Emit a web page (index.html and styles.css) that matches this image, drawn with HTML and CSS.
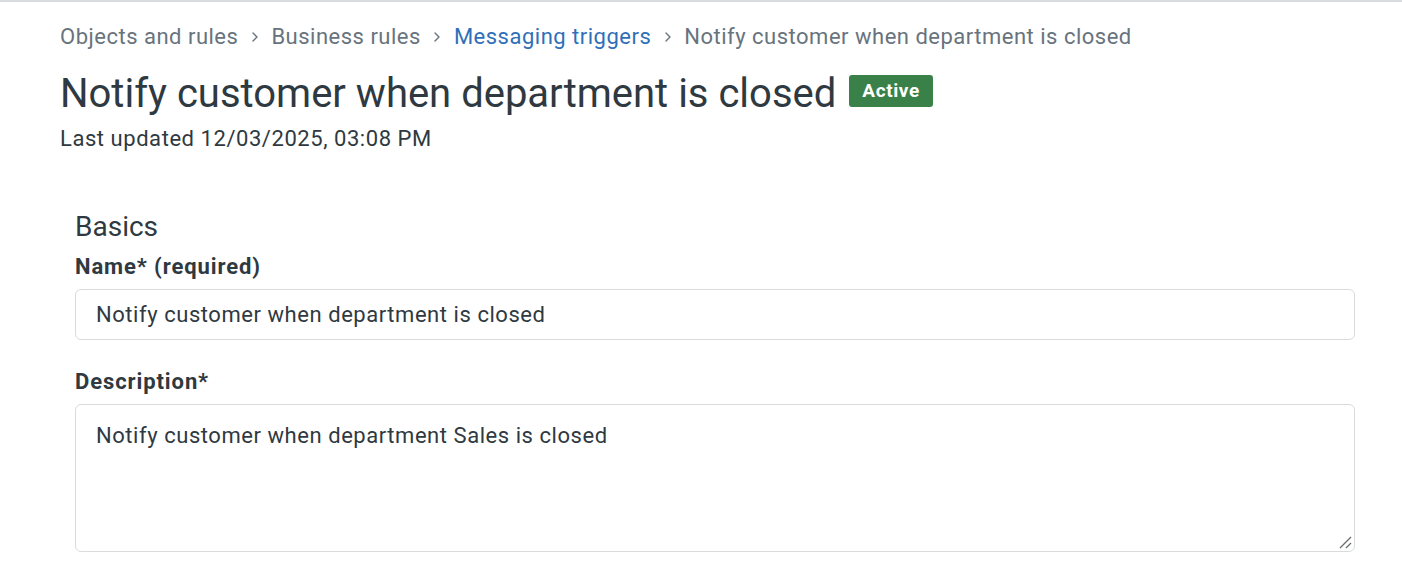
FILE: index.html
```html
<!DOCTYPE html>
<html lang="en">
<head>
<meta charset="utf-8">
<title>Notify customer when department is closed</title>
<link rel="stylesheet" href="styles.css">
</head>
<body>
<div class="page">
  <nav class="breadcrumb">
    <span class="crumb">Objects and rules</span>
    <span class="sep"><svg width="14" height="14" viewBox="0 0 14 14"><path d="M5 3l4 4-4 4" fill="none" stroke="currentColor" stroke-width="1.4" stroke-linecap="round" stroke-linejoin="round"/></svg></span>
    <span class="crumb">Business rules</span>
    <span class="sep"><svg width="14" height="14" viewBox="0 0 14 14"><path d="M5 3l4 4-4 4" fill="none" stroke="currentColor" stroke-width="1.4" stroke-linecap="round" stroke-linejoin="round"/></svg></span>
    <a class="crumb link" href="#">Messaging triggers</a>
    <span class="sep"><svg width="14" height="14" viewBox="0 0 14 14"><path d="M5 3l4 4-4 4" fill="none" stroke="currentColor" stroke-width="1.4" stroke-linecap="round" stroke-linejoin="round"/></svg></span>
    <span class="crumb">Notify customer when department is closed</span>
  </nav>
  <div class="title-row">
    <h1 class="title">Notify customer when department is closed</h1>
    <span class="badge">Active</span>
  </div>
  <p class="updated">Last updated 12/03/2025, 03:08 PM</p>

  <section class="basics">
    <h2 class="section-title">Basics</h2>
    <div class="field">
      <label class="label">Name* (required)</label>
      <div class="input">Notify customer when department is closed</div>
    </div>
    <div class="field">
      <label class="label">Description*</label>
      <div class="textarea">Notify customer when department Sales is closed
        <svg class="grip" width="14" height="14" viewBox="0 0 14 14"><path d="M2 13L13 2M8 13l5-5" stroke="#6b6b6b" stroke-width="1.3" fill="none"/></svg>
      </div>
    </div>
  </section>
</div>
</body>
</html>
```

FILE: styles.css
```css
* { box-sizing: border-box; }
html, body { margin: 0; padding: 0; background: #fff; }
body {
  font-family: Roboto, "Noto Sans", sans-serif;
  color: #2f3941;
  border-top: 2px solid #d8dcde;
}
.page {
  padding: 21px 47px 0 60px;
}
.breadcrumb {
  display: flex;
  align-items: center;
  font-size: 22px;
  letter-spacing: 0.5px;
  line-height: 28px;
  color: #68737d;
  height: 28px;
}
.crumb { white-space: nowrap; text-decoration: none; color: #68737d; }
.crumb.link { color: #2f6fb8; }
.sep { display: inline-flex; width: 33px; justify-content: center; color: #68737d; }
.title-row {
  display: flex;
  align-items: center;
  margin-top: 13px;
  height: 60px;
}
.title {
  margin: 0;
  font-size: 40px;
  font-weight: 400;
  line-height: 60px;
  white-space: nowrap;
}
.badge {
  margin-left: 13px;
  margin-top: -6px;
  background: #3a8049;
  color: #fff;
  font-weight: 700;
  font-size: 19px;
  letter-spacing: 0.6px;
  line-height: 32px;
  height: 32px;
  padding: 0 13px;
  border-radius: 3px;
}
.updated {
  margin: 1px 0 0;
  font-size: 22px;
  letter-spacing: 0.55px;
  line-height: 28px;
}
.basics {
  padding: 56px 0 0 15px;
}
.section-title {
  margin: 0;
  font-size: 28px;
  font-weight: 400;
  line-height: 36px;
}
.field { margin-top: 8px; }
.field + .field { margin-top: 28px; }
.label {
  display: block;
  font-size: 22px;
  letter-spacing: 0.9px;
  font-weight: 700;
  line-height: 28px;
  margin-bottom: 8px;
}
.input, .textarea {
  border: 1px solid #d8dcde;
  border-radius: 6px;
  font-size: 22px;
  letter-spacing: 0.55px;
  line-height: 28px;
  padding: 11px 20px;
  color: #2f3941;
}
.input { height: 51px; }
.textarea { height: 148px; position: relative; padding-top: 17px; }
.grip { position: absolute; right: 2px; bottom: 2px; }
```
